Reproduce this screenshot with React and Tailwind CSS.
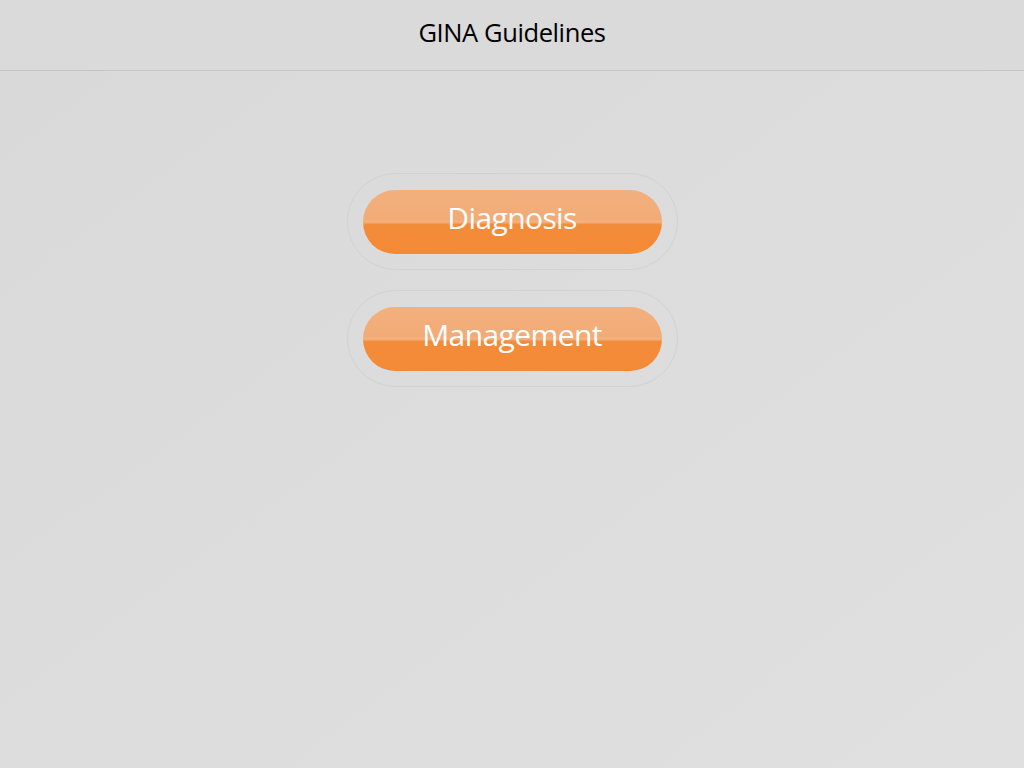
export default function App() {
  const items = ['Diagnosis', 'Management'];
  return (
    <div className="w-[1024px] h-[768px] flex flex-col bg-gradient-to-br from-[#d9d9d9] to-[#e0e0e0] font-['Open_Sans',sans-serif]">
      <header className="h-[71px] shrink-0 flex items-center justify-center border-b border-[#c4c4c4] bg-[#dadada]">
        <h1 className="text-[25.5px] text-black -mt-[5px] tracking-[-0.4px]">GINA Guidelines</h1>
      </header>
      <main className="flex flex-col items-center pt-[102px] gap-[20px]">
        {items.map((label) => (
          <div key={label} className="w-[331px] h-[97px] rounded-full border border-[#d2d2d2] flex items-center justify-center">
            <button className="w-[299px] h-[64px] rounded-full bg-[linear-gradient(to_bottom,#f2b07e_0%,#f2ab76_46%,#f4b283_50%,#f38c3a_54%,#f38a36_100%)] text-white text-[30px] font-medium tracking-[-0.6px] flex items-center justify-center pb-[8px]">
              {label}
            </button>
          </div>
        ))}
      </main>
    </div>
  );
}
